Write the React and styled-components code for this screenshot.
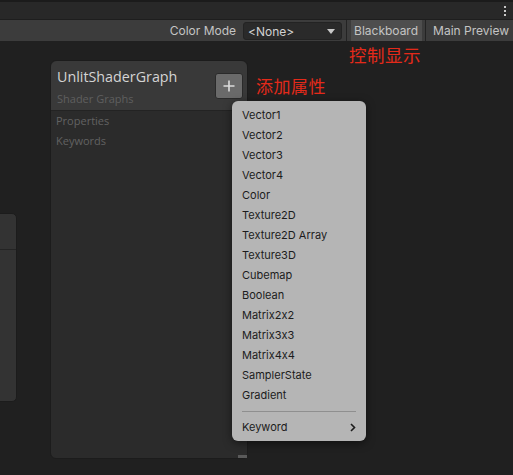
import React from "react";
import styled, { createGlobalStyle } from "styled-components";

const Global = createGlobalStyle`
  html, body { margin: 0; padding: 0; background: #202020; }
  body { width: 513px; height: 475px; overflow: hidden; }
  * { box-sizing: border-box; }
`;

const Root = styled.div`
  width: 513px;
  height: 475px;
  display: flex;
  flex-direction: column;
  background: #202020;
  font-family: Inter, "Liberation Sans", sans-serif;
  font-feature-settings: "calt" 0;
`;

const TabBar = styled.div`
  height: 20px;
  border-top: 2px solid #1b1b1b;
  background: #282828;
  border-bottom: 1px solid #1e1e1e;
  display: flex;
  justify-content: flex-end;
  align-items: center;
  padding-right: 7px;
`;

const Kebab = styled.div`
  display: flex;
  flex-direction: column;
  gap: 2px;
  span {
    width: 2px;
    height: 2px;
    background: #c8c8c8;
    display: block;
  }
`;

const Toolbar = styled.div`
  height: 21px;
  background: #3c3c3c;
  display: flex;
  justify-content: flex-end;
  align-items: stretch;
  font-size: 12px;
  color: #c4c4c4;
`;

const Label = styled.div`
  display: flex;
  align-items: center;
  padding-right: 7px;
`;

const Dropdown = styled.div`
  width: 99px;
  margin: 2px 0 1px;
  background: #2a2a2a;
  border: 1px solid #232323;
  border-radius: 3px;
  display: flex;
  align-items: center;
  justify-content: space-between;
  padding: 0 6px 0 4px;
  color: #d2d2d2;
`;

const Sep = styled.div`
  width: 1px;
  background: #232323;
  margin: 0 ${(p) => p.$m || 3}px;
`;

const ToolButton = styled.div`
  display: flex;
  align-items: center;
  padding: 0 4px 0 ${(p) => (p.$first ? 3 : 4)}px;
  background: ${(p) => (p.$active ? "#4e4e4e" : "transparent")};
  color: #c4c4c4;
  white-space: nowrap;
`;

const Canvas = styled.div`
  flex: 1;
  position: relative;
  overflow: hidden;
  background: #202020;
`;

const Board = styled.div`
  position: absolute;
  left: 50px;
  top: 19px;
  width: 198px;
  height: 399px;
  background: #2b2b2b;
  border: 1px solid #1c1c1c;
  border-radius: 6px;
  display: flex;
  flex-direction: column;
  font-family: "Open Sans", "Noto Sans", sans-serif;
`;

const BoardHeader = styled.div`
  height: 50px;
  background: #393939;
  border-radius: 6px 6px 0 0;
  border-bottom: 1px solid #232323;
  display: flex;
  justify-content: space-between;
  padding: 6px 4px 0 6px;
`;

const TitleBox = styled.div`
  display: flex;
  flex-direction: column;
`;

const Title = styled.div`
  font-size: 14.3px;
  color: #d4d4d4;
  line-height: 20px;
`;

const Subtitle = styled.div`
  font-size: 11px;
  color: #5f5f5f;
  line-height: 16px;
  margin-top: 4px;
`;

const PlusButton = styled.div`
  width: 28px;
  height: 26px;
  margin-top: 6px;
  background: #6a6a6a;
  border: 1px solid #2a2a2a;
  border-radius: 3px;
  display: flex;
  align-items: center;
  justify-content: center;
`;

const Section = styled.div`
  font-size: 11px;
  color: #626262;
  padding-left: 5px;
  line-height: 20px;
`;

const Sections = styled.div`
  display: flex;
  flex-direction: column;
`;

const ResizeGrip = styled.div`
  position: absolute;
  right: 0;
  bottom: 0;
  width: 9px;
  height: 3px;
  background: #5a5a5a;
`;

const SideNode = styled.div`
  position: absolute;
  left: -10px;
  top: 172px;
  width: 27px;
  height: 189px;
  background: #333333;
  border: 1px solid #1c1c1c;
  border-radius: 0 5px 5px 0;
  display: flex;
  flex-direction: column;
`;

const SideHeader = styled.div`
  height: 36px;
  border-bottom: 1px solid #242424;
`;

const Menu = styled.div`
  position: absolute;
  left: 232px;
  top: 60px;
  width: 134px;
  height: 340px;
  background: #b5b5b5;
  border-radius: 6px;
  box-shadow: 0 2px 8px rgba(0, 0, 0, 0.5);
  padding: 4px 0;
  display: flex;
  flex-direction: column;
  font-family: Inter, "Liberation Sans", sans-serif;
  font-feature-settings: "calt" 0;
`;

const MenuItem = styled.div`
  flex-shrink: 0;
  height: 20px;
  line-height: 20px;
  padding: 0 10px;
  font-size: 11px;
  color: #1c1c1c;
  display: flex;
  justify-content: space-between;
  align-items: center;
`;

const MenuSep = styled.div`
  flex-shrink: 0;
  height: 1px;
  background: #8f8f8f;
  margin: 6px 10px 5px 10px;
`;

const Note = styled.div`
  position: absolute;
  left: ${(p) => p.$x}px;
  top: ${(p) => p.$y}px;
  color: #e42a1a;
  font-size: ${(p) => p.$size || 17}px;
  line-height: 22px;
  letter-spacing: 0.5px;
  font-family: "Noto Sans CJK SC", sans-serif;
  white-space: nowrap;
`;

const items = [
  "Vector1",
  "Vector2",
  "Vector3",
  "Vector4",
  "Color",
  "Texture2D",
  "Texture2D Array",
  "Texture3D",
  "Cubemap",
  "Boolean",
  "Matrix2x2",
  "Matrix3x3",
  "Matrix4x4",
  "SamplerState",
  "Gradient",
];

export default function App() {
  return (
    <Root>
      <Global />
      <TabBar>
        <Kebab>
          <span />
          <span />
          <span />
        </Kebab>
      </TabBar>
      <Toolbar>
        <Label>Color Mode</Label>
        <Dropdown>
          <span>&lt;None&gt;</span>
          <svg width="8" height="5" viewBox="0 0 8 5">
            <path d="M0 0 L8 0 L4 5 Z" fill="#c8c8c8" />
          </svg>
        </Dropdown>
        <Sep $m={4} />
        <ToolButton $active $first>Blackboard</ToolButton>
        <Sep $m={3} />
        <ToolButton>Main Preview</ToolButton>
      </Toolbar>
      <Canvas>
        <SideNode>
          <SideHeader />
        </SideNode>
        <Board>
          <BoardHeader>
            <TitleBox>
              <Title>UnlitShaderGraph</Title>
              <Subtitle>Shader Graphs</Subtitle>
            </TitleBox>
            <PlusButton>
              <svg width="12" height="12" viewBox="0 0 12 12">
                <path d="M6 0.5 V11.5 M0.5 6 H11.5" stroke="#dcdcdc" strokeWidth="1.6" />
              </svg>
            </PlusButton>
          </BoardHeader>
          <Sections>
            <Section>Properties</Section>
            <Section>Keywords</Section>
          </Sections>
          <ResizeGrip />
        </Board>
        <Menu>
          {items.map((t) => (
            <MenuItem key={t}>{t}</MenuItem>
          ))}
          <MenuSep />
          <MenuItem>
            <span>Keyword</span>
            <svg width="6" height="9" viewBox="0 0 6 9">
              <path d="M1 1 L4.5 4.5 L1 8" stroke="#1c1c1c" strokeWidth="1.6" fill="none" />
            </svg>
          </MenuItem>
        </Menu>
        <Note $x={256} $y={34}>添加属性</Note>
        <Note $x={349} $y={3} $size={17.5}>控制显示</Note>
      </Canvas>
    </Root>
  );
}
